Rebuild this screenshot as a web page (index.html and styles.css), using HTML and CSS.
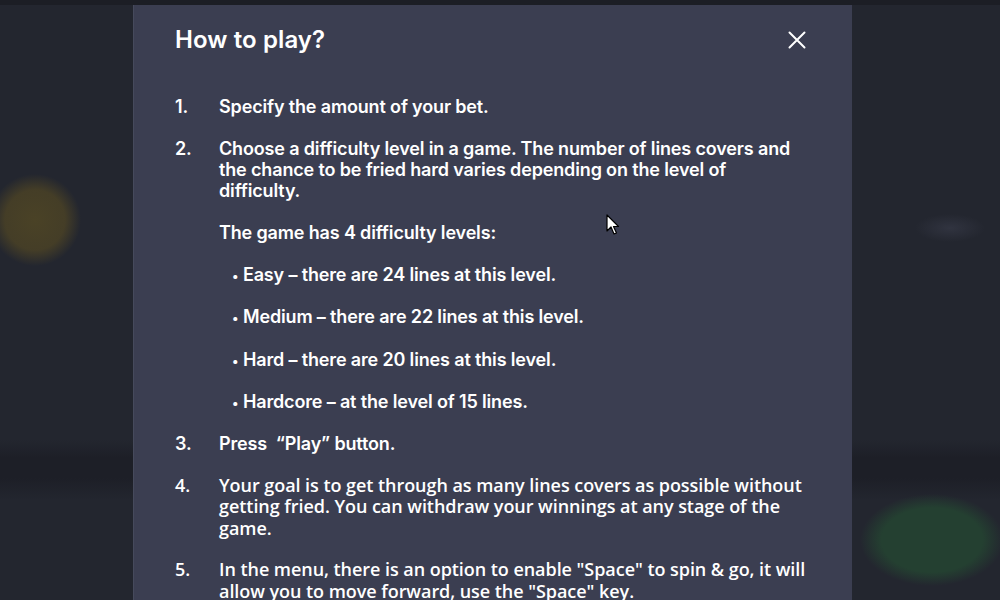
FILE: index.html
```html
<!DOCTYPE html>
<html lang="en">
<head>
<meta charset="utf-8">
<title>How to play?</title>
<link rel="stylesheet" href="styles.css">
</head>
<body>
<div class="modal">
  <div class="modal-head">
    <h2 class="modal-title">How to play?</h2>
    <button class="close" aria-label="Close">
      <svg width="24" height="24" viewBox="0 0 24 24"><path d="M4.5 4.5 L19.5 19.5 M19.5 4.5 L4.5 19.5" stroke="#fff" stroke-width="2" stroke-linecap="round" fill="none"/></svg>
    </button>
  </div>
  <ol class="steps">
    <li class="step"><span class="num">1.</span><div class="body"><p>Specify the amount of your bet.</p></div></li>
    <li class="step"><span class="num">2.</span><div class="body">
      <p>Choose a difficulty level in a game. The number of lines covers and the chance to be fried hard varies depending on the level of difficulty.</p>
      <p>The game has 4 difficulty levels:</p>
      <ul class="levels">
        <li><span class="dot">•</span> Easy – there are 24 lines at this level.</li>
        <li><span class="dot">•</span> Medium – there are 22 lines at this level.</li>
        <li><span class="dot">•</span> Hard – there are 20 lines at this level.</li>
        <li><span class="dot">•</span> Hardcore – at the level of 15 lines.</li>
      </ul>
    </div></li>
    <li class="step"><span class="num">3.</span><div class="body"><p>Press &nbsp;“Play” button.</p></div></li>
    <li class="step alt first-alt"><span class="num">4.</span><div class="body"><p>Your goal is to get through as many lines covers as possible without getting fried. You can withdraw your winnings at any stage of the game.</p></div></li>
    <li class="step alt"><span class="num">5.</span><div class="body"><p>In the menu, there is an option to enable "Space" to spin &amp; go, it will allow you to move forward, use the "Space" key.</p></div></li>
  </ol>
</div>
<svg class="cursor" width="14" height="22" viewBox="0 0 14 22"><path d="M1 1 L1 17 L5 13 L8 20 L10.5 19 L7.5 12.5 L12.5 12.5 Z" fill="#fff" stroke="#000" stroke-width="1.2" stroke-linejoin="round"/></svg>
</body>
</html>
```
FILE: styles.css
```css
html, body {
  margin: 0;
  height: 100%;
  overflow: hidden;
}
body {
  font-family: "Inter", "Open Sans", sans-serif;
  color: #fff;
  background-color: #23262f;
  background-image:
    linear-gradient(#1c1e25, #1c1e25),
    radial-gradient(circle at 35px 220px, rgba(74,66,38,1) 0, rgba(72,64,38,0.9) 30px, rgba(35,38,47,0) 46px),
    radial-gradient(ellipse 72px 46px at 932px 540px, rgba(36,64,49,1) 70%, rgba(35,38,47,0) 100%),
    radial-gradient(ellipse 35px 14px at 950px 228px, rgba(52,55,68,0.8) 0, rgba(35,38,47,0) 100%),
    linear-gradient(#23262f 0, #23262f 440px, #1d1f27 458px, #1d1f27 478px, #23262f 500px);
  background-size: 100% 5px, auto, auto, auto, auto;
  background-repeat: no-repeat;
}
.modal {
  width: 719px;
  height: 640px;
  margin: 5px 0 0 133px;
  box-sizing: border-box;
  background: #3b3e51;
  border-left: 1px solid #464a5c;
  padding: 20px 43px 0 41px;
}
.modal-head {
  display: flex;
  align-items: center;
  justify-content: space-between;
  height: 30px;
}
.modal-title {
  margin: 0;
  font-size: 24px;
  font-weight: 600;
  line-height: 30px;
  letter-spacing: 0.1px;
}
.close {
  background: none;
  border: 0;
  padding: 0;
  width: 24px;
  height: 24px;
  display: flex;
}
.steps {
  list-style: none;
  margin: 41px 0 0;
  padding: 0;
}
.step {
  display: flex;
  font-size: 18px;
  font-weight: 600;
  line-height: 21px;
  margin-bottom: 21px;
  letter-spacing: -0.15px;
}
.num {
  width: 44px;
  flex: none;
}
.body p {
  margin: 0 0 21px;
}
.body p:last-child {
  margin-bottom: 0;
}
.levels {
  list-style: none;
  margin: 0;
  padding: 0 0 0 13px;
}
.levels li {
  margin-bottom: 21.3px;
}
.levels li:last-child {
  margin-bottom: 0;
}
.dot {
  font-size: 13px;
  line-height: 0;
  letter-spacing: 0;
}
.step.alt {
  font-family: "Open Sans", "Inter", sans-serif;
  font-size: 18px;
  letter-spacing: -0.05px;
  line-height: 21.5px;
}
.step.first-alt {
  margin-bottom: 20px;
}
.cursor {
  position: absolute;
  left: 606px;
  top: 214px;
}
```
